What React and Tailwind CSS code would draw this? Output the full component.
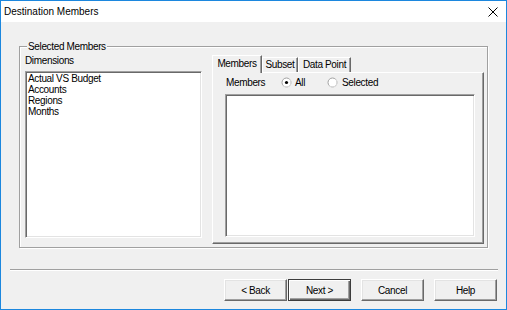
const FONT = { fontFamily: '"Liberation Sans", Arial, sans-serif' };

// classic raised / sunken 3D edges
const raised =
  "border-l border-t border-r border-b border-l-white border-t-white border-r-[#696969] border-b-[#696969] shadow-[inset_-1px_-1px_0_#a0a0a0,inset_1px_1px_0_#e3e3e3]";
const sunken =
  "border-l border-t border-r border-b border-l-[#a0a0a0] border-t-[#a0a0a0] border-r-white border-b-white shadow-[inset_1px_1px_0_#696969,inset_-1px_-1px_0_#e3e3e3]";

function Radio({ checked }) {
  return (
    <svg width="11" height="11" viewBox="0 0 11 11" className="shrink-0">
      <circle cx="5.5" cy="5.5" r="4.5" fill="white" stroke="#a0a0a0" strokeWidth="1" />
      <path d="M8.7 2.3 A4.5 4.5 0 0 1 2.3 8.7" fill="none" stroke="#e3e3e3" strokeWidth="1" />
      {checked && <circle cx="5.5" cy="5.5" r="1.6" fill="#000" />}
    </svg>
  );
}

function Tab({ label, active, width }) {
  return (
    <div
      className={
        "flex items-center justify-center border-l border-t border-r border-l-white border-t-white border-r-[#696969] bg-[#f0f0f0] shadow-[inset_-1px_0_0_#a0a0a0] " +
        (active ? "relative z-10 h-[18px] -mb-[1px] pb-[1px]" : "h-[15px]")
      }
      style={{ width }}
    >
      <span className="leading-none">{label}</span>
    </div>
  );
}

function Button({ label, primary }) {
  return (
    <div
      className={
        "flex h-[22px] w-[63px] items-center justify-center bg-[#f0f0f0] " +
        (primary
          ? "border border-[#3c3c3c] shadow-[inset_1px_1px_0_white,inset_-1px_-1px_0_#696969,inset_-2px_-2px_0_#a0a0a0]"
          : raised)
      }
    >
      {label}
    </div>
  );
}

export default function App() {
  return (
    <div
      className="flex h-[310px] w-[507px] flex-col border border-[#1c87de] bg-[#f0f0f0] text-[10px] tracking-[-0.35px] text-black"
      style={FONT}
    >
      {/* Title bar */}
      <div className="flex h-[21px] shrink-0 items-center justify-between bg-white pl-[3px] pr-[8px] text-[10px] tracking-normal">
        <span>Destination Members</span>
        <svg width="10" height="10" viewBox="0 0 10 10">
          <path d="M0.5 0.5 L9.5 9.5 M9.5 0.5 L0.5 9.5" stroke="#000" strokeWidth="1" />
        </svg>
      </div>

      {/* Group box */}
      <div className="relative ml-[18px] mt-[24px] h-[202px] w-[469px] border border-[#a0a0a0] shadow-[inset_1px_1px_0_white,1px_1px_0_white]">
        <span className="absolute left-[7px] top-[-6px] bg-[#f0f0f0] px-[1px] leading-[12px]">
          Selected Members
        </span>

        <div className="flex pl-[5px]">
          {/* Dimensions list */}
          <div className="flex w-[177px] flex-col pt-[7px]">
            <span className="leading-[14px]">Dimensions</span>
            <div className={"mt-[3px] h-[167px] bg-white pl-[1px] pt-[1px] " + sunken}>
              {["Actual VS Budget", "Accounts", "Regions", "Months"].map((d) => (
                <div key={d} className="pl-[1px] leading-[11px]">
                  {d}
                </div>
              ))}
            </div>
          </div>

          {/* Tab control */}
          <div className="ml-[10px] flex w-[272px] flex-col pt-[8px]">
            <div className="flex h-[17px] items-end">
              <Tab label="Members" active width={50} />
              <Tab label="Subset" width={36} />
              <Tab label="Data Point" width={53} />
            </div>
            <div className="h-[172px] border-l border-t border-r border-b border-l-white border-t-white border-r-[#696969] border-b-[#696969] shadow-[inset_-1px_-1px_0_#a0a0a0]">
              <div className="mt-[2px] flex h-[14px] items-center pl-[13px]">
                <span className="w-[55px]">Members</span>
                <div className="flex w-[46px] items-center gap-[3px]">
                  <Radio checked />
                  <span>All</span>
                </div>
                <div className="flex items-center gap-[4px]">
                  <Radio />
                  <span>Selected</span>
                </div>
              </div>
              <div className={"ml-[12px] mt-[5px] h-[143px] w-[250px] bg-white " + sunken} />
            </div>
          </div>
        </div>
      </div>

      {/* Separator */}
      <div className="ml-[9px] mt-[21px] h-[2px] w-[488px] border-t border-b border-t-[#a0a0a0] border-b-white" />

      {/* Buttons */}
      <div className="ml-[223px] mt-[8px] flex">
        <Button label="< Back" />
        <div className="ml-[1px]">
          <Button label="Next >" primary />
        </div>
        <div className="ml-[10px]">
          <Button label="Cancel" />
        </div>
        <div className="ml-[10px]">
          <Button label="Help" />
        </div>
      </div>
    </div>
  );
}
